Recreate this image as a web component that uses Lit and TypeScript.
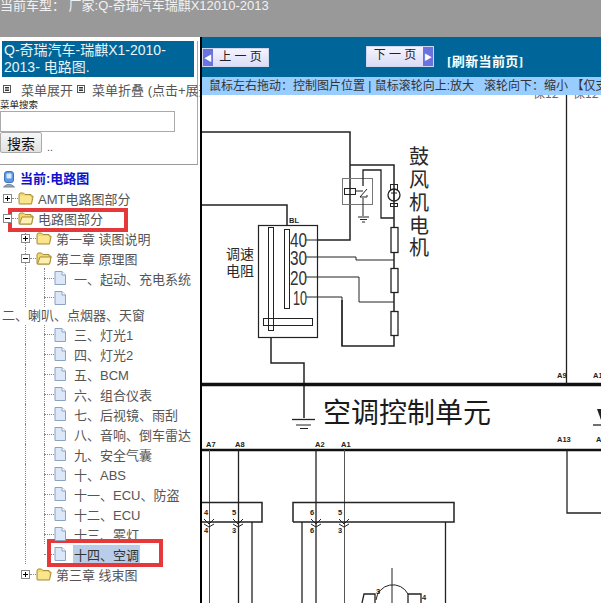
import { LitElement, html, css, svg, nothing } from "lit";
import { customElement } from "lit/decorators.js";

type Row = { level: 0 | 1 | 2; label: string; kind: "plus" | "minus" | "page"; tight?: boolean; guides?: string };

const rows: Row[] = [
  { level: 0, label: "AMT电路图部分", kind: "plus" },
  { level: 0, label: "电路图部分", kind: "minus" },
  { level: 1, label: "第一章 读图说明", kind: "plus", guides: "a" },
  { level: 1, label: "第二章 原理图", kind: "minus", guides: "a" },
  { level: 2, label: "一、起动、充电系统", kind: "page", guides: "ab" },
  { level: 2, label: "", kind: "page", guides: "ab", tight: true },
];
const rows2: Row[] = ["三、灯光1", "四、灯光2", "五、BCM", "六、组合仪表", "七、后视镜、雨刮", "八、音响、倒车雷达", "九、安全气囊", "十、ABS", "十一、ECU、防盗", "十二、ECU", "十三、雾灯"]
  .map((label, i) => ({ level: 2 as const, label, kind: "page" as const, guides: "ab", tight: i === 0 }));

const folder = (open: boolean) => html`<svg class="ic" width="16" height="14" viewBox="0 0 16 14">
  <path d="M1 3.500V12.500Q1 13 1.500 13H13.500L15 6V5H13V3.500H7L5.500 2H2Z" fill="#f5d76a" stroke="#a88d3a" stroke-width="1"/>
  ${open ? svg`<path d="M1.500 13L4 6H15L13.500 13Z" fill="#fdf0b0" stroke="#a88d3a"/>` : svg`<path d="M2 5H13V12H2Z" fill="#fbe58c"/>`}
</svg>`;
const page = html`<svg class="ic" width="12" height="14" viewBox="0 0 12 14">
  <path d="M1 .5H8L11.500 4V13.500H1Z" fill="#dce8f8" stroke="#8aa2c4"/>
  <path d="M8 .5V4H11.500" fill="#fff" stroke="#8aa2c4"/>
</svg>`;
const expander = (minus: boolean) => html`<svg class="ex" width="9" height="9" viewBox="0 0 9 9">
  <rect x=".5" y=".5" width="8" height="8" fill="#fff" stroke="#888"/>
  <path d="M2 4.500H7" stroke="#000"/>${minus ? nothing : svg`<path d="M4.500 2V7" stroke="#000"/>`}
</svg>`;
const menuIcon = html`<svg class="mi" width="8" height="8" viewBox="0 0 8 8">
  <rect x=".5" y=".5" width="7" height="7" fill="#fff" stroke="#555"/>
  <path d="M2 2.500H6M2 4H6M2 5.500H6" stroke="#333"/>
</svg>`;

const schematic = svg`
  <g fill="none" stroke="#222" stroke-width="1">
    <path stroke-width="1.500" d="M202 132H350V240H317M202 205H287V225"/>
    <path stroke-width="1.500" d="M350 165H394V227M394 252V268M394 292V311M394 335V346H342V300"/>
    <path d="M306 240H317M306 257H356V260H394M306 277H359V302H394M306 297H342V346"/>
    <rect x="258.500" y="225.500" width="59" height="112" stroke-width="1.200"/>
    <rect x="268.500" y="227.500" width="5" height="103"/>
    <rect x="284.500" y="229.500" width="5" height="79"/>
    <rect x="263.500" y="318.500" width="49" height="7"/>
    <rect x="391" y="227.500" width="7" height="25" stroke-width="1.300"/>
    <rect x="391" y="268.500" width="7" height="24" stroke-width="1.300"/>
    <rect x="391" y="311.500" width="7" height="24" stroke-width="1.300"/>
    <rect x="342.500" y="178.500" width="30" height="26" stroke="#777"/>
    <rect x="344.500" y="188.500" width="11" height="6"/>
    <path d="M355 191H363" />
    <path stroke-width="1.300" d="M363 186V170H381V218H394"/>
    <path d="M367 189L360 197H367V195M363 198V216"/>
    <path d="M358 217H369M360 219.500H367M362 222H365"/>
    <circle cx="394" cy="195" r="6" stroke-width="1.300"/>
    <path d="M394 190V200M391 193H397"/>
    <rect x="390.500" y="184.500" width="7" height="5"/>
    <rect x="390.500" y="203.500" width="7" height="3"/>
    <path stroke-width="1.500" d="M271 337V363H304V418"/>
    <path stroke-width="3.500" stroke="#111" d="M202 384.500H601"/>
    <path stroke-width="2.500" stroke="#111" d="M202 450H601"/>
    <path d="M292 419.500H315" stroke-width="1.300"/><path d="M296 425H311"/><path d="M300 428.500H308"/>
    <path d="M566.500 95V384M567 450V513H601" stroke-width="1.300"/>
    <path stroke="#555" d="M209.500 450V603M344.500 450V603"/>
    <path stroke-width="1.300" d="M238.500 450V603M316 450V603M252 522V603M302 522V603M445.500 522V603"/>
    <path stroke-width="1.500" d="M202 502.500H262V522H202M293 522V502.500H454V522H293"/>
    ${[209, 238, 316, 344].map((x) => svg`<path d="M${x - 5} 519L${x} 524L${x + 5} 519M${x - 5} 524L${x} 527L${x + 5} 524"/>`)}
    <path stroke-width="1.300" d="M362 603L364 594H375V603M408 603V594H421V603"/>
    <path stroke-width="1" d="M376 600A17 17 0 0 1 408 594M392 568V603"/>
    <path stroke-width="1.300" d="M593 425H601"/>
  </g>
  <path d="M597 409H601V420Z" fill="#222"/>
  <g class="t-d" fill="#2a2a2a">
    <text x="409" y="164" font-size="20">鼓</text>
    <text x="409" y="187" font-size="20">风</text>
    <text x="409" y="210" font-size="20">机</text>
    <text x="409" y="233" font-size="20">电</text>
    <text x="409" y="255" font-size="20">机</text>
    <text x="226" y="259" font-size="14">调速</text>
    <text x="226" y="276" font-size="14">电阻</text>
    <text x="323" y="423" font-size="28" fill="#1a1a1a">空调控制单元</text>
    <text x="533" y="98" font-size="12" fill="#666">保12</text>
    <text x="573" y="98" font-size="12" fill="#666">保12</text>
  </g>
  <g class="t-n" fill="#333">
    <text x="290" y="247" font-size="20" textLength="17" lengthAdjust="spacingAndGlyphs">40</text>
    <text x="290" y="265" font-size="20" textLength="17" lengthAdjust="spacingAndGlyphs">30</text>
    <text x="290" y="285" font-size="20" textLength="17" lengthAdjust="spacingAndGlyphs">20</text>
    <text x="293" y="305" font-size="20" textLength="14" lengthAdjust="spacingAndGlyphs">10</text>
  </g>
  <g class="t-s" fill="#222" font-size="7.500" font-weight="700">
    <text x="289" y="223">BL</text>
    <text x="206" y="447">A7</text><text x="235" y="447">A8</text><text x="315" y="447">A2</text><text x="341" y="447">A1</text>
    <text x="557" y="378">A9</text><text x="593" y="378">A10</text>
    <text x="557" y="442">A13</text><text x="596" y="442">A6</text>
    <text x="204" y="515">4</text><text x="232" y="515">5</text><text x="310" y="515">6</text><text x="338" y="515">5</text>
    <text x="204" y="533">4</text><text x="232" y="533">3</text><text x="310" y="533">6</text><text x="338" y="533">3</text>
    <text x="376" y="594">3</text><text x="422" y="600">4</text>
  </g>
`;

@customElement("app-root")
export class AppRoot extends LitElement {
  static styles = css`
    :host { display: block; position: relative; width: 601px; height: 603px; overflow: hidden; background: #fff;
      font-family: "Liberation Sans", "Noto Sans CJK SC", sans-serif; color: #555; }
    .top { height: 37px; background: #999; color: #f2f2f2; font-size: 13px; line-height: 12px; white-space: nowrap; overflow: hidden; }
    .main { display: flex; height: 566px; }
    .side { width: 200px; flex: none; overflow: hidden; white-space: nowrap; }
    .side-head { height: 124px; box-sizing: border-box; border-bottom: 1px solid #999; margin-right: 2px; border-right: 1px solid #aaa; }
    .title { margin: 4px 3px 0 2px; height: 36px; background: #069; color: #e8f4fa; font-size: 14px; line-height: 17px; padding: 1px 2px; box-sizing: border-box; white-space: normal; }
    .menu { display: flex; align-items: center; height: 22px; padding: 2px 0 0 3px; box-sizing: border-box; font-size: 13px; color: #555; }
    .mi { flex: none; }
    .menu span { margin: 0 4px 0 10px; }
    .menu span + .mi + span { margin: 0 0 0 7px; }
    .s-label { font-size: 9.500px; line-height: 10px; color: #222; height: 12px; padding-top: 1px; box-sizing: border-box; }
    .search { display: block; width: 175px; height: 21px; box-sizing: border-box; border: 1px solid #aaa; }
    .s-row { display: flex; align-items: flex-end; height: 21px; }
    .btn { width: 42px; height: 21px; box-sizing: border-box; border: 1px solid #aaa; border-radius: 2px; background: linear-gradient(#f6f6f6, #e2e2e2); font-size: 14px; color: #111; display: flex; align-items: center; justify-content: center; }
    .dots { margin-left: 5px; font-size: 11px; line-height: 12px; color: #555; }
    .cur { height: 23px; display: flex; align-items: flex-end; padding-left: 3px; gap: 5px; color: #11c; font-weight: 700; font-size: 13px; line-height: 18px; }
    .row { height: 20px; display: flex; align-items: center; position: relative; font-size: 13px; }
    .row.tight { height: 19px; }
    .row.l0 { padding-left: 3px; }
    .row.l1 { padding-left: 21px; }
    .row.l2 { padding-left: 44px; }
    .guide-a::before, .guide-b::after { content: ""; position: absolute; top: 0; bottom: 0; border-left: 1px dotted #888; }
    .guide-a::before { left: 25px; }
    .guide-b::after { left: 44px; }
    .ex, .ic { flex: none; position: relative; z-index: 1; }
    .dash { width: 6px; flex: none; border-top: 1px dotted #888; }
    .row.l2 .dash { width: 10px; }
    .lab { margin-left: 4px; }
    .row.l2 .lab { margin-left: 8px; }
    .plain { height: 18px; line-height: 18px; font-size: 13px; padding-left: 2px; }
    .row.l2 .sel { background: #b9cce8; padding: 0 1px; margin-left: 7px; color: #333; }
    .red { position: absolute; border: 4px solid #e5383b; box-sizing: border-box; pointer-events: none; }
    .red.a { left: 8px; top: 208px; width: 120px; height: 24px; }
    .red.b { left: 47px; top: 539px; width: 116px; height: 28px; }
    .view { flex: 1; min-width: 0; border-left: 2px solid #000; overflow: hidden; display: flex; flex-direction: column; }
    .nav { height: 40px; background: #069; flex: none; display: flex; align-items: flex-start; color: #fff; }
    .pg { display: flex; align-items: stretch; height: 19px; box-sizing: border-box; background: linear-gradient(#f4f4ff, #dcdcf6); border: 1px solid #cfd6f0; font-size: 12px; color: #222; white-space: nowrap; }
    .pg.prev { width: 67px; margin-top: 11px; }
    .pg.next { width: 68px; margin: 9px 0 0 97px; height: 21px; }
    .pg b { width: 10px; background: #6a72e0; color: #fff; display: flex; align-items: center; justify-content: center; font-size: 8px; font-weight: 400; }
    .pg span { flex: 1; text-align: center; line-height: 17px; }
    .refresh { margin: 16px 0 0 13px; font-size: 13px; font-weight: 700; line-height: 18px; font-family: "Liberation Serif", "Noto Sans CJK SC", serif; letter-spacing: .4px; }
    .hint { height: 18px; background: #9cf; color: #333; flex: none; font-size: 12px; line-height: 18px; padding-left: 7px; white-space: pre; overflow: hidden; }
    .canvas { flex: 1; min-height: 0; }
    .canvas svg { display: block; margin-left: -2px; }
    .t-d { font-family: "Noto Sans CJK SC", sans-serif; font-weight: 400; }
    .t-n, .t-s { font-family: "Liberation Sans", sans-serif; }
  `;

  private row(r: Row) {
    const cls = `row l${r.level}${r.tight ? " tight" : ""}${r.guides?.includes("a") ? " guide-a" : ""}${r.guides?.includes("b") ? " guide-b" : ""}`;
    return html`<div class=${cls}>
      ${r.kind === "page" ? html`<i class="dash"></i>${page}` : html`${expander(r.kind === "minus")}<i class="dash"></i>${folder(r.kind === "minus")}`}
      ${r.label ? html`<span class="lab">${r.label}</span>` : nothing}
    </div>`;
  }

  render() {
    return html`
      <div class="top">当前车型： 厂家:Q-奇瑞汽车瑞麒X12010-2013</div>
      <div class="main">
        <aside class="side">
          <div class="side-head">
            <div class="title">Q-奇瑞汽车-瑞麒X1-2010-2013- 电路图.</div>
            <div class="menu">${menuIcon}<span>菜单展开</span>${menuIcon}<span>菜单折叠 (点击+展开)</span></div>
            <div class="s-label">菜单搜索</div>
            <div class="search"></div>
            <div class="s-row"><div class="btn">搜索</div><div class="dots">..</div></div>
          </div>
          <div class="cur">
            <svg width="12" height="17" viewBox="0 0 12 17">
              <rect x="1.500" y=".5" width="9" height="11" rx="2.500" fill="#5c9ae6" stroke="#3f74b8"/>
              <rect x="3.500" y="2.500" width="5" height="5" rx="1" fill="#d8e8fa"/>
              <path d="M.5 16Q6 10.500 11.500 16Z" fill="#9aa6b8" stroke="#77839a"/>
            </svg>
            <span>当前:电路图</span>
          </div>
          <div class="tree">
            ${rows.map((r) => this.row(r))}
            <div class="plain">二、喇叭、点烟器、天窗</div>
            ${rows2.map((r) => this.row(r))}
            <div class="row l2 guide-a"><i class="dash"></i>${page}<span class="lab sel">十四、空调</span></div>
            <div class="row l1">${expander(false)}<i class="dash"></i>${folder(false)}<span class="lab">第三章 线束图</span></div>
          </div>
        </aside>
        <section class="view">
          <div class="nav">
            <div class="pg prev"><b>◀</b><span>上 一 页</span></div>
            <div class="pg next"><span>下 一 页</span><b>▶</b></div>
            <div class="refresh">[刷新当前页]</div>
          </div>
          <div class="hint">鼠标左右拖动：控制图片位置 | 鼠标滚轮向上:放大   滚轮向下：缩小 【仅支持IE浏览器】</div>
          <div class="canvas">
            <svg width="401" height="508" viewBox="200 95 401 508">${schematic}</svg>
          </div>
        </section>
      </div>
      <div class="red a"></div>
      <div class="red b"></div>
    `;
  }
}
